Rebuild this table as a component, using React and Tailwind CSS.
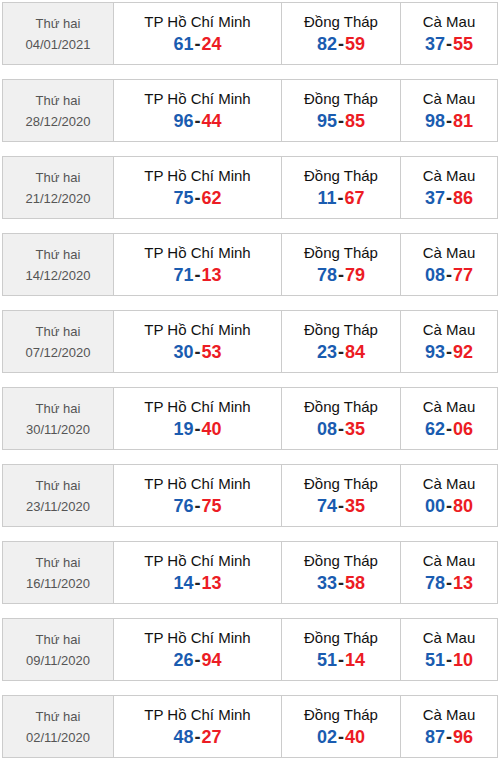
const rows = [
  { date: '04/01/2021', r: [['61', '24'], ['82', '59'], ['37', '55']] },
  { date: '28/12/2020', r: [['96', '44'], ['95', '85'], ['98', '81']] },
  { date: '21/12/2020', r: [['75', '62'], ['11', '67'], ['37', '86']] },
  { date: '14/12/2020', r: [['71', '13'], ['78', '79'], ['08', '77']] },
  { date: '07/12/2020', r: [['30', '53'], ['23', '84'], ['93', '92']] },
  { date: '30/11/2020', r: [['19', '40'], ['08', '35'], ['62', '06']] },
  { date: '23/11/2020', r: [['76', '75'], ['74', '35'], ['00', '80']] },
  { date: '16/11/2020', r: [['14', '13'], ['33', '58'], ['78', '13']] },
  { date: '09/11/2020', r: [['26', '94'], ['51', '14'], ['51', '10']] },
  { date: '02/11/2020', r: [['48', '27'], ['02', '40'], ['87', '96']] },
]

const provinces = ['TP Hồ Chí Minh', 'Đồng Tháp', 'Cà Mau']

function Pair({ a, b }) {
  return (
    <div className="h-[24px] leading-[24px] text-[18px] font-bold text-[#222]">
      <span className="text-[#1a5cb0]">{a}</span>
      <span className="px-[1px]">-</span>
      <span className="text-[#ec1c24]">{b}</span>
    </div>
  )
}

function Result({ row }) {
  return (
    <table className="w-[496px] h-[63px] table-fixed border-collapse mb-[14px]">
      <colgroup>
        <col className="w-[111px]" />
        <col className="w-[168px]" />
        <col className="w-[119px]" />
        <col />
      </colgroup>
      <tbody>
        <tr>
          {/* date cell */}
          <td className="border border-[#cccccc] bg-[#f0f0f0] text-center align-middle text-[13px] text-[#555] leading-[21px] pt-[1px]">
            <div>Thứ hai</div>
            <div>{row.date}</div>
          </td>
          {row.r.map((p, i) => (
            <td key={i} className="border border-[#cccccc] text-center align-middle">
              <div className="h-[21px] leading-[21px] text-[15px] text-[#111]">{provinces[i]}</div>
              <Pair a={p[0]} b={p[1]} />
            </td>
          ))}
        </tr>
      </tbody>
    </table>
  )
}

export default function App() {
  return (
    <div className="bg-white pt-[2px] pl-[2px]" style={{ fontFamily: '"Liberation Sans", Arial, sans-serif' }}>
      {rows.map((row) => (
        <Result key={row.date} row={row} />
      ))}
    </div>
  )
}
